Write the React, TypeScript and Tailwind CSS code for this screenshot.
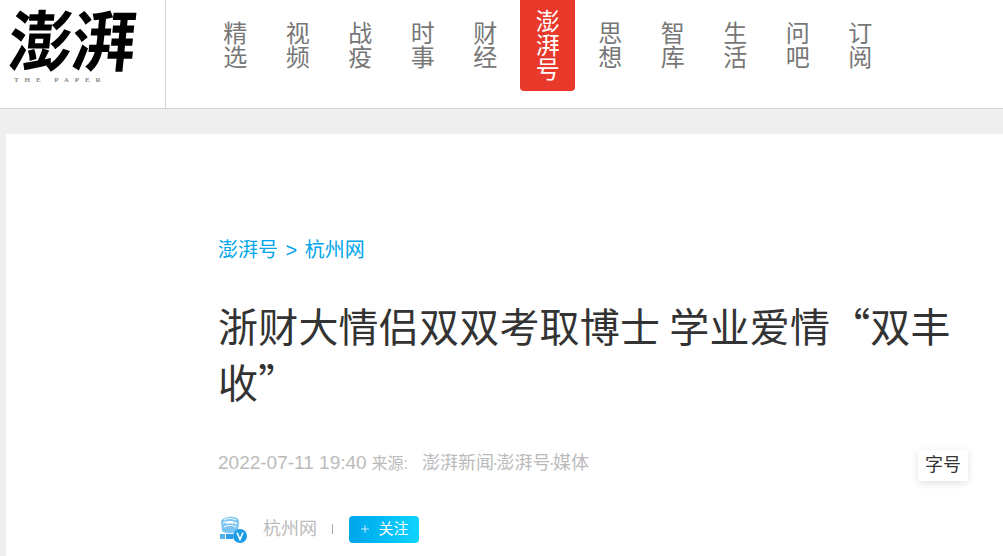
import { Plus } from 'lucide-react';

const navLeft = [
  ['精', '选'],
  ['视', '频'],
  ['战', '疫'],
  ['时', '事'],
  ['财', '经'],
];
const navRight = [
  ['思', '想'],
  ['智', '库'],
  ['生', '活'],
  ['问', '吧'],
  ['订', '阅'],
];

function NavItem({ chars }: { chars: string[] }) {
  return (
    <a href="#" className="flex h-[91px] w-[62.5px] flex-col items-center justify-center text-[24px] leading-[24px] font-normal text-[#777]">
      {chars.map((c) => (
        <span key={c}>{c}</span>
      ))}
    </a>
  );
}

function AccountIcon() {
  return (
    <svg width="30" height="30" viewBox="0 0 30 30" fill="none">
      <path d="M3 7c2-4 13-6 17-2 1 1 1 3 1 4l-1 7c-2 4-13 4-16 1z" fill="#7cc4f2" />
      <path d="M6 6c3-2 9-2 12 0M5 9c3-2 11-2 14 1M6 13c3-2 9-2 12 0M8 9.500c2-1 5-1 7 0" stroke="#fff" strokeWidth="1.200" />
      <rect x="2" y="20" width="5" height="5" fill="#58b2ee" />
      <rect x="8" y="20" width="7" height="5" fill="#2f9de6" />
      <circle cx="22" cy="22" r="7" fill="#1a9be6" />
      <path d="M19 18.500l3 7 3-7" stroke="#fff" strokeWidth="1.600" />
    </svg>
  );
}

export default function App() {
  return (
    <div className="relative h-[556px] w-[1003px] overflow-hidden bg-[#efefef] font-['Liberation_Sans','Noto_Sans_CJK_SC',sans-serif]">
      <header className="flex h-[109px] border-b border-[#d4d4d4] bg-white">
        <div className="flex h-full w-[166px] flex-col items-start border-r border-[#d4d4d4] pt-[11px] pl-[12px]">
          <div className="h-[66px] origin-top-left scale-y-[1.04] -skew-x-6 text-[64px] leading-[62px] font-bold tracking-[-1px] text-black">澎湃</div>
          <div className="pl-[2px] font-['Liberation_Serif',serif] text-[7px] leading-[7px] font-bold tracking-[5.900px] text-[#888]">THE PAPER</div>
        </div>
        <nav className="ml-[38px] flex items-start">
          {navLeft.map((n) => (
            <NavItem key={n[0]} chars={n} />
          ))}
          <a href="#" className="flex h-[91px] w-[62.5px] justify-center">
            <span className="flex w-[55px] flex-col items-center rounded-b-[4px] bg-[#e9392b] pt-[10px] text-[24px] leading-[24px] font-normal text-white">
              <span>澎</span>
              <span>湃</span>
              <span>号</span>
            </span>
          </a>
          {navRight.map((n) => (
            <NavItem key={n[0]} chars={n} />
          ))}
        </nav>
      </header>

      <main className="mt-[25px] ml-[6px] h-[422px] bg-white pt-[102px] pl-[212px]">
        <div className="flex items-center gap-[7.500px] text-[20px] leading-[28px] text-[#00a5eb]">
          <span>澎湃号</span>
          <span>&gt;</span>
          <span>杭州网</span>
        </div>
        <h1 className="mt-[33px] w-[740px] font-['Noto_Sans_CJK_SC',sans-serif] text-[40px] leading-[56px] font-normal tracking-[0.2px] text-[#333]">
          浙财大情侣双双考取博士 学业爱情“双丰收”
        </h1>
        <div className="mt-[40px] flex items-baseline leading-[28px] text-[#bbb]">
          <span className="text-[19px]">2022-07-11 19:40</span>
          <span className="ml-[5px] text-[16px]">来源:</span>
          <span className="ml-[14px] text-[18px]">
            澎湃新闻<span className="-mx-[1.750px]">·</span>澎湃号<span className="-mx-[1.750px]">·</span>媒体
          </span>
        </div>
        <div className="mt-[36px] flex items-center">
          <AccountIcon />
          <span className="ml-[15px] text-[18px] leading-[27px] text-[#bbb]">杭州网</span>
          <span className="ml-[15px] h-[10px] w-px bg-[#aaa]" />
          <a href="#" className="ml-[16px] flex h-[27px] w-[70px] items-center justify-center gap-[7px] rounded-[4px] bg-gradient-to-r from-[#00a5eb] to-[#0fd4ff] text-[15px] text-white">
            <Plus size={12} strokeWidth={1.5} />
            <span>关注</span>
          </a>
        </div>
      </main>

      <div className="absolute top-[450px] left-[918px] flex h-[31px] w-[50px] items-center justify-center bg-white text-[18px] text-[#333] shadow-[0_2px_8px_rgba(0,0,0,0.12)]">
        字号
      </div>
    </div>
  );
}
